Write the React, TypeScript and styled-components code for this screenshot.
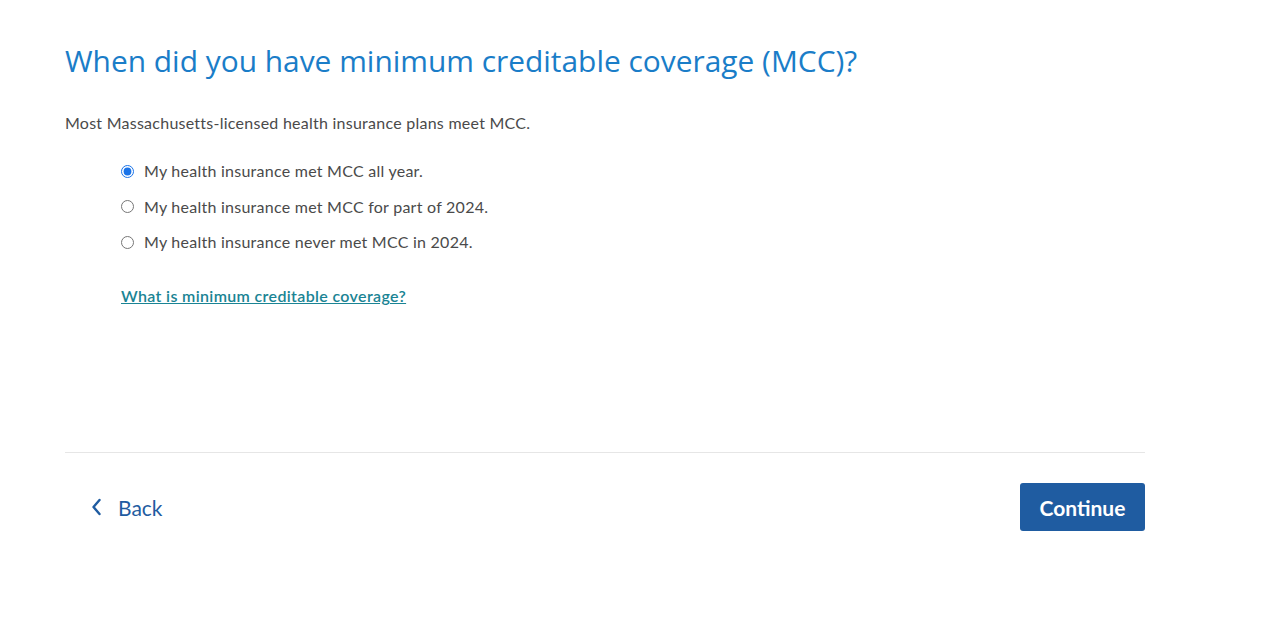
import React, { useState } from "react";
import styled, { createGlobalStyle } from "styled-components";

const Global = createGlobalStyle`
  html, body { margin: 0; padding: 0; background: #fff; }
  body { font-family: Lato, "Noto Sans", sans-serif; }
`;

const Page = styled.main`
  width: 1080px;
  padding: 0 0 0 65px;
  display: flex;
  flex-direction: column;
`;

const Title = styled.h1`
  margin: 40px 0 0 0;
  font-family: "Open Sans", "Noto Sans", sans-serif;
  font-weight: 400;
  font-size: 29.9px;
  line-height: 42px;
  color: #1a7dc8;
`;

const Intro = styled.p`
  margin: 30px 0 0 0;
  font-size: 16px;
  letter-spacing: 0.25px;
  line-height: 22px;
  color: #4a4a4a;
`;

const Options = styled.div`
  display: flex;
  flex-direction: column;
  gap: 13.5px;
  margin: 26px 0 0 56px;
`;

const OptionRow = styled.label`
  display: flex;
  align-items: center;
  gap: 10px;
  font-size: 16px;
  letter-spacing: 0.25px;
  line-height: 22px;
  color: #4a4a4a;
  cursor: pointer;
`;

const Radio = styled.input`
  margin: 0;
  width: 13px;
  height: 13px;
  accent-color: #1a73e8;
`;

const HelpLink = styled.a`
  margin: 32px 0 0 56px;
  font-size: 16px;
  letter-spacing: 0.35px;
  line-height: 22px;
  font-weight: 600;
  color: #1a8494;
  text-decoration: underline;
  align-self: flex-start;
`;

const Divider = styled.hr`
  margin: 145px 0 0 0;
  border: none;
  border-top: 1px solid #e6e6e6;
  width: 1080px;
`;

const Footer = styled.div`
  display: flex;
  justify-content: space-between;
  align-items: center;
  margin-top: 30px;
`;

const BackButton = styled.button`
  display: flex;
  align-items: center;
  gap: 16px;
  background: none;
  border: none;
  padding: 0 0 0 26px;
  font-family: Lato, "Noto Sans", sans-serif;
  font-size: 21px;
  color: #1f5ca1;
  cursor: pointer;
`;

const ContinueButton = styled.button`
  width: 125px;
  height: 48px;
  background: #1f5ca1;
  color: #fff;
  border: none;
  border-radius: 3px;
  font-family: Lato, "Noto Sans", sans-serif;
  font-size: 21px;
  font-weight: 700;
  cursor: pointer;
`;

const options = [
  "My health insurance met MCC all year.",
  "My health insurance met MCC for part of 2024.",
  "My health insurance never met MCC in 2024.",
];

export default function App() {
  const [sel, setSel] = useState(0);
  return (
    <>
      <Global />
      <Page>
        <Title>When did you have minimum creditable coverage (MCC)?</Title>
        <Intro>Most Massachusetts-licensed health insurance plans meet MCC.</Intro>
        <Options>
          {options.map((o, i) => (
            <OptionRow key={i}>
              <Radio type="radio" name="mcc" checked={sel === i} onChange={() => setSel(i)} />
              {o}
            </OptionRow>
          ))}
        </Options>
        <HelpLink href="#">What is minimum creditable coverage?</HelpLink>
        <Divider />
        <Footer>
          <BackButton>
            <svg width="11" height="18" viewBox="0 0 11 18">
              <path d="M8.5 2 L2.5 9 L8.5 16" fill="none" stroke="#1f5ca1" strokeWidth="2.4" strokeLinecap="round" strokeLinejoin="round" />
            </svg>
            Back
          </BackButton>
          <ContinueButton>Continue</ContinueButton>
        </Footer>
      </Page>
    </>
  );
}
